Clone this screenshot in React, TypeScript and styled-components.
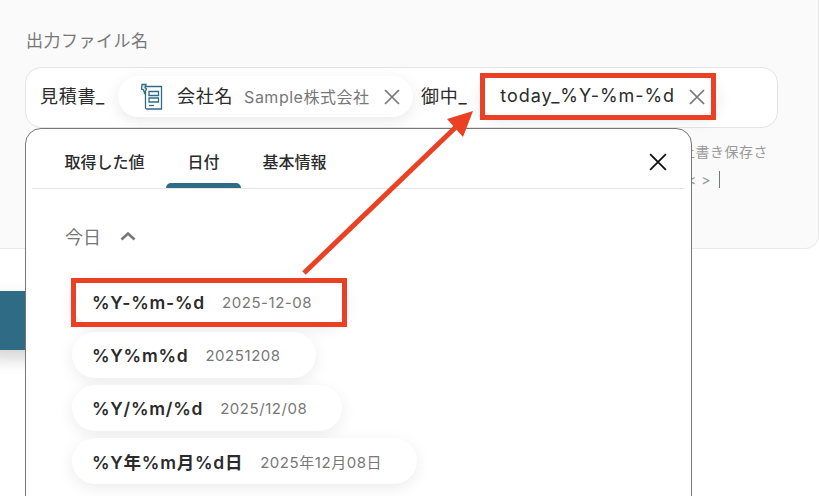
import styled, { createGlobalStyle } from "styled-components";

const GlobalStyle = createGlobalStyle`
  html, body {
    margin: 0;
    background: #fff;
  }
  * {
    box-sizing: border-box;
  }
`

const FONT = `Inter, "Noto Sans CJK JP", sans-serif`
const RED = '#ea4125'

const formats = [
  { key: '%Y-%m-%d', sample: '2025-12-08' },
  { key: '%Y%m%d', sample: '20251208' },
  { key: '%Y/%m/%d', sample: '2025/12/08' },
  { key: '%Y年%m月%d日', sample: '2025年12月08日' },
]

const CloseIcon = ({ size, color, width }: { size: number; color: string; width: number }) => (
  <svg width={size} height={size} viewBox="0 0 16 16" fill="none" stroke={color} strokeWidth={width}>
    <path d="M1 1 L15 15 M15 1 L1 15" />
  </svg>
)

const SheetIcon = () => (
  <svg width="24" height="28" viewBox="0 0 24 28" fill="none" stroke="#2f6b84" strokeWidth="1.3">
    <path d="M6 3.5 H21.5 V26 H7 Q5.5 26 5.5 24.5 V9" />
    <path d="M2 1.5 H6 L5 4.5 L6.5 6 L4.5 10 L3.5 7 L1.5 6 Z" fill="#dfeaf0" />
    <path d="M9 8.5 H18.5 V12.5 H9 Z M9 15 H18.5 V19 H9 Z" />
    <path d="M9 22.5 H14" />
  </svg>
)

const App = () => {
  return (
    <Page>
      <GlobalStyle/>
      <Panel>
        <Label>出力ファイル名</Label>
        <Field>
          <InputBox>
            <Plain $width={78}>見積書_</Plain>
            <Chip $width={295}>
              <ChipIcon><SheetIcon/></ChipIcon>
              <ChipName>会社名</ChipName>
              <ChipValue>Sample株式会社</ChipValue>
              <CloseIcon size={16} color="#777" width={1.7}/>
            </Chip>
            <Plain $width={0} $gap={8}>御中_</Plain>
            <Chip $width={239} $gap={12}>
              <TodayName>today_%Y-%m-%d</TodayName>
              <CloseIcon size={16} color="#777" width={1.7}/>
            </Chip>
          </InputBox>

          <Dropdown>
            <Tabs>
              <Tab>取得した値</Tab>
              <Tab $active>日付</Tab>
              <Tab>基本情報</Tab>
              <CloseButton><CloseIcon size={18} color="#111" width={1.6}/></CloseButton>
            </Tabs>
            <Body>
              <SectionTitle>
                今日
                <svg width="16" height="10" viewBox="0 0 16 10" fill="none" stroke="#777" strokeWidth="2.6">
                  <path d="M1.5 8.5 L8 2.5 L14.5 8.5" />
                </svg>
              </SectionTitle>
              <OptionList>
                {formats.map((f) => (
                  <Option key={f.key}>
                    <OptionKey>{f.key}</OptionKey>
                    <OptionSample>{f.sample}</OptionSample>
                  </Option>
                ))}
              </OptionList>
            </Body>
          </Dropdown>
        </Field>
        <Hint>同じファイル名がある場合は上書き保存さ</Hint>
        <Hint>* &lt; &gt;<Caret/></Hint>
      </Panel>

      <SaveButton/>

      <Frame $left={71} $top={278} $width={276} $height={49}/>
      <Frame $left={480} $top={73} $width={236} $height={47}/>
      <Arrow width="820" height="496" viewBox="0 0 820 496">
        <path d="M304 273 L458 125" stroke={RED} strokeWidth="5" fill="none"/>
        <path d="M473 111 L447 119 L463 137 Z" fill={RED}/>
      </Arrow>
    </Page>
  )
}

const Page = styled.div`
  position: relative;
  width: 820px;
  height: 496px;
  overflow: hidden;
  background: #fff;
  font-family: ${FONT};
`

const Panel = styled.div`
  width: 819px;
  height: 249px;
  padding: 28px 40px 0 25px;
  background: #fafafa;
  border: 1px solid #e9e9e9;
  border-width: 0 1px 1px 0;
  border-radius: 0 0 14px 0;
`

const Label = styled.div`
  font-size: 17px;
  line-height: 25px;
  letter-spacing: 0.5px;
  color: #777;
  padding-top: 1px;
  margin: 0 0 13px 1px;
`

const Field = styled.div`
  position: relative;
  margin-bottom: 9px;
`

const InputBox = styled.div`
  height: 61px;
  display: flex;
  align-items: center;
  padding: 0 14px;
  background: #fff;
  border: 1px solid #e4e4e4;
  border-radius: 16px;
`

const Plain = styled.span<{ $width: number; $gap?: number }>`
  flex: none;
  width: ${({ $width }) => ($width ? `${$width}px` : 'auto')};
  margin-left: ${({ $gap }) => $gap ?? 0}px;
  margin-right: ${({ $gap }) => ($gap ? 12 : 0)}px;
  padding-bottom: 6px;
  font-size: 18px;
  letter-spacing: 0.7px;
  color: #2b2b2b;
  white-space: nowrap;
`

const Chip = styled.div<{ $width: number; $gap?: number }>`
  flex: none;
  width: ${({ $width }) => $width}px;
  height: 41px;
  display: flex;
  align-items: center;
  padding: 0 13px 0 ${({ $gap }) => $gap ?? 22}px;
  margin-top: -2px;
  background: #fff;
  border-radius: 21px;
  box-shadow: 0 4px 16px rgba(0, 0, 0, 0.09);
`

const ChipIcon = styled.span`
  display: flex;
  width: 37px;
  flex: none;
`

const ChipName = styled.span`
  padding-bottom: 3px;
  font-size: 18px;
  letter-spacing: 0.7px;
  color: #2b2b2b;
  margin-right: 11px;
  white-space: nowrap;
`

const ChipValue = styled.span`
  flex: 1;
  padding-bottom: 2px;
  font-size: 16px;
  letter-spacing: 0.5px;
  color: #777;
  white-space: nowrap;
`

const TodayName = styled.span`
  flex: 1;
  padding: 0 0 2px 9px;
  font-size: 18px;
  letter-spacing: 0.95px;
  color: #2b2b2b;
  white-space: nowrap;
`

const Dropdown = styled.div`
  position: absolute;
  z-index: 2;
  top: 100%;
  left: 0;
  width: 667px;
  height: 420px;
  padding: 0 6px;
  background: #fff;
  border: 1px solid #777;
  border-radius: 16px 16px 0 0;
`

const Tabs = styled.div`
  display: flex;
  align-items: flex-start;
  height: 60px;
  padding-left: 11px;
  border-bottom: 1px solid #e6e6e6;
`

const Tab = styled.div<{ $active?: boolean }>`
  position: relative;
  height: 59px;
  padding: 22px 21.5px 0;
  font-size: 16px;
  line-height: 22px;
  font-weight: 500;
  color: #2b2b2b;
  white-space: nowrap;

  &::after {
    content: '';
    display: ${({ $active }) => ($active ? 'block' : 'none')};
    position: absolute;
    left: 0;
    right: 0;
    bottom: 0;
    height: 5px;
    background: #2f6b84;
    border-radius: 5px 5px 0 0;
  }
`

const CloseButton = styled.div`
  display: flex;
  margin: 24px 18px 0 auto;
`

const Body = styled.div`
  padding: 34px 0 0 33px;
`

const SectionTitle = styled.div`
  display: flex;
  align-items: center;
  gap: 19px;
  height: 26px;
  font-size: 18px;
  color: #777;
`

const OptionList = styled.div`
  display: flex;
  flex-direction: column;
  align-items: flex-start;
  gap: 7px;
  margin: 30px 0 0 7px;
`

const Option = styled.div`
  display: flex;
  align-items: center;
  gap: 17px;
  height: 46px;
  padding: 0 35px 0 20px;
  background: #fff;
  border-radius: 23px;
  box-shadow: 0 4px 16px rgba(0, 0, 0, 0.08);
  white-space: nowrap;
`

const OptionKey = styled.span`
  font-size: 17.5px;
  font-weight: 600;
  letter-spacing: 0.75px;
  color: #2b2b2b;
`

const OptionSample = styled.span`
  font-size: 15px;
  letter-spacing: 0.55px;
  color: #777;
`

const Hint = styled.div`
  display: flex;
  justify-content: flex-end;
  align-items: center;
  gap: 8px;
  height: 28px;
  padding-right: 10px;
  font-size: 14px;
  letter-spacing: 0.5px;
  color: #999;
  white-space: nowrap;

  &:last-child {
    padding-right: 58px;
  }
`

const Caret = styled.span`
  width: 1px;
  height: 17px;
  background: #777;
`

const SaveButton = styled.div`
  width: 240px;
  height: 59px;
  margin: 42px 0 0 -20px;
  background: #2f6b84;
  border-radius: 8px;
  box-shadow: 0 8px 18px rgba(0, 0, 0, 0.18);
`

const Frame = styled.div<{ $left: number; $top: number; $width: number; $height: number }>`
  position: absolute;
  z-index: 3;
  left: ${({ $left }) => $left}px;
  top: ${({ $top }) => $top}px;
  width: ${({ $width }) => $width}px;
  height: ${({ $height }) => $height}px;
  border: 5px solid ${RED};
`

const Arrow = styled.svg`
  position: absolute;
  z-index: 3;
  left: 0;
  top: 0;
  pointer-events: none;
`

export default App
